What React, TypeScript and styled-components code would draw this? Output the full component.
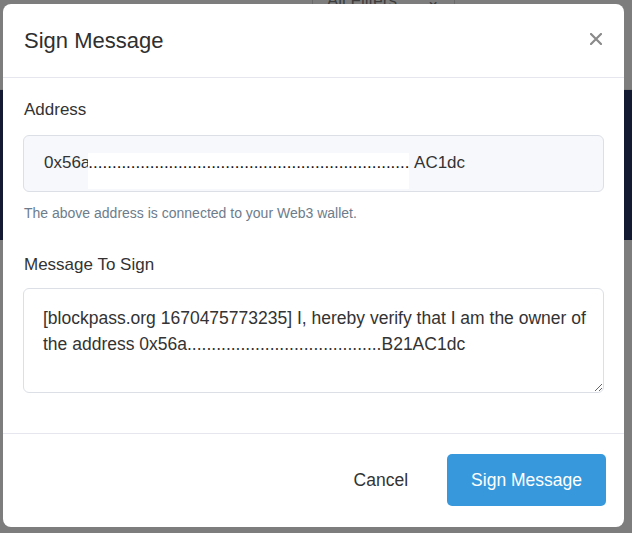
import React from "react";
import styled, { createGlobalStyle } from "styled-components";

const GlobalStyle = createGlobalStyle`
  html, body {
    margin: 0;
    padding: 0;
    background: #7d7d7d;
  }
  body {
    font-family: "Liberation Sans", Arial, sans-serif;
    color: #333333;
  }
`;

const ADDRESS_DOTS = ".".repeat(68);
const MESSAGE =
  "[blockpass.org 1670475773235] I, hereby verify that I am the owner of the address 0x56a" +
  ".".repeat(40) +
  "B21AC1dc";

// Dimmed page that sits behind the dialog
const Page = styled.div`
  position: relative;
  width: 632px;
  height: 533px;
  overflow: hidden;
  display: flex;
  flex-direction: column;
  background: #7d7d7d;
`;

const PageTopBar = styled.div`
  height: 90px;
  display: flex;
  align-items: flex-start;
  padding-left: 312px;
  border-bottom: 1px solid #757575;
  box-sizing: border-box;
`;

const FilterBox = styled.div<{ $width: number }>`
  width: ${(p) => p.$width}px;
  height: 30px;
  margin-top: -14px;
  border-left: 1px solid #6a6a6a;
  display: flex;
  align-items: center;
  justify-content: space-between;
  padding: 0 14px;
  box-sizing: border-box;
  font-size: 17px;
  line-height: 20px;
  color: #3d3d3d;
`;

const PageBand = styled.div`
  height: 150px;
  background: #141a32;
`;

const PageRest = styled.div`
  flex: 1;
  background: #7d7d7d;
`;

// Dialog
const Modal = styled.div`
  position: absolute;
  left: 3px;
  top: 4px;
  width: 621px;
  height: 523px;
  background: #ffffff;
  border-radius: 8px;
  display: flex;
  flex-direction: column;
  box-sizing: border-box;
`;

const Header = styled.div`
  height: 74px;
  display: flex;
  align-items: center;
  justify-content: space-between;
  padding: 0 22px 0 21px;
  border-bottom: 1px solid #e6e6ee;
  box-sizing: border-box;
`;

const Title = styled.h2`
  margin: 0;
  font-size: 22px;
  font-weight: 400;
  color: #2f2f2f;
`;

const CloseButton = styled.button`
  border: none;
  background: none;
  padding: 0;
  width: 12px;
  height: 12px;
  margin-top: -4px;
  display: flex;
  cursor: pointer;
`;

const Body = styled.div`
  padding: 20px 20px 40px;
  display: flex;
  flex-direction: column;
`;

const Label = styled.label<{ $top?: number; $gap?: number }>`
  font-size: 17px;
  line-height: 24px;
  color: #333333;
  margin-top: ${(p) => p.$top ?? 0}px;
  margin-bottom: ${(p) => p.$gap ?? 13}px;
  padding-left: 1px;
`;

const AddressField = styled.div`
  height: 57px;
  box-sizing: border-box;
  border: 1px solid #dcdfe6;
  border-radius: 6px;
  background: #f7f8fc;
  padding: 17px 20px 0;
  display: flex;
  align-items: flex-start;
  font-size: 17px;
  line-height: 20px;
  color: #333333;
  overflow: hidden;
`;

const Redacted = styled.span`
  display: inline-block;
  width: 321px;
  height: 36px;
  margin-left: -2px;
  background: #ffffff;
  color: #111111;
`;

const Helper = styled.div`
  font-size: 14px;
  line-height: 20px;
  color: #6d7c8c;
  margin-top: 11px;
  padding-left: 1px;
`;

const MessageArea = styled.textarea`
  height: 105px;
  box-sizing: border-box;
  border: 1px solid #dcdfe6;
  border-radius: 6px;
  background: #ffffff;
  padding: 16px 10px 10px 19px;
  font-family: "Liberation Sans", Arial, sans-serif;
  font-size: 17.5px;
  line-height: 26px;
  color: #333333;
  resize: vertical;
  outline: none;
`;

const Footer = styled.div`
  flex: 1;
  border-top: 1px solid #e6e6ee;
  display: flex;
  align-items: flex-start;
  justify-content: flex-end;
  gap: 19px;
  padding: 20px 18px 0 0;
`;

const Button = styled.button<{ $primary?: boolean }>`
  height: 52px;
  padding: 0 ${(p) => (p.$primary ? "24px" : "20px")};
  border: none;
  border-radius: 5px;
  font-family: "Liberation Sans", Arial, sans-serif;
  font-size: 17.5px;
  background: ${(p) => (p.$primary ? "#3799dc" : "transparent")};
  color: ${(p) => (p.$primary ? "#ffffff" : "#333333")};
  cursor: pointer;
`;

const CloseIcon = () => (
  <svg width="12" height="12" viewBox="0 0 12 12">
    <path d="M1 1 L11 11 M11 1 L1 11" stroke="#8a8a8a" strokeWidth="2.2" strokeLinecap="round" />
  </svg>
);

const App: React.FC = () => {
  return (
    <>
      <GlobalStyle />
      <Page>
        <PageTopBar>
          <FilterBox $width={142}>
            <span>All Filters</span>
            <span>⌄</span>
          </FilterBox>
          <FilterBox $width={178}>
            <span>Search by Address /</span>
          </FilterBox>
        </PageTopBar>
        <PageBand />
        <PageRest />

        <Modal role="dialog">
          <Header>
            <Title>Sign Message</Title>
            <CloseButton aria-label="Close">
              <CloseIcon />
            </CloseButton>
          </Header>
          <Body>
            <Label>Address</Label>
            <AddressField>
              <span>0x56a</span>
              <Redacted>{ADDRESS_DOTS}</Redacted>
              <span>&nbsp;AC1dc</span>
            </AddressField>
            <Helper>The above address is connected to your Web3 wallet.</Helper>
            <Label $top={30} $gap={11}>
              Message To Sign
            </Label>
            <MessageArea defaultValue={MESSAGE} readOnly />
          </Body>
          <Footer>
            <Button>Cancel</Button>
            <Button $primary>Sign Message</Button>
          </Footer>
        </Modal>
      </Page>
    </>
  );
};

export default App;
